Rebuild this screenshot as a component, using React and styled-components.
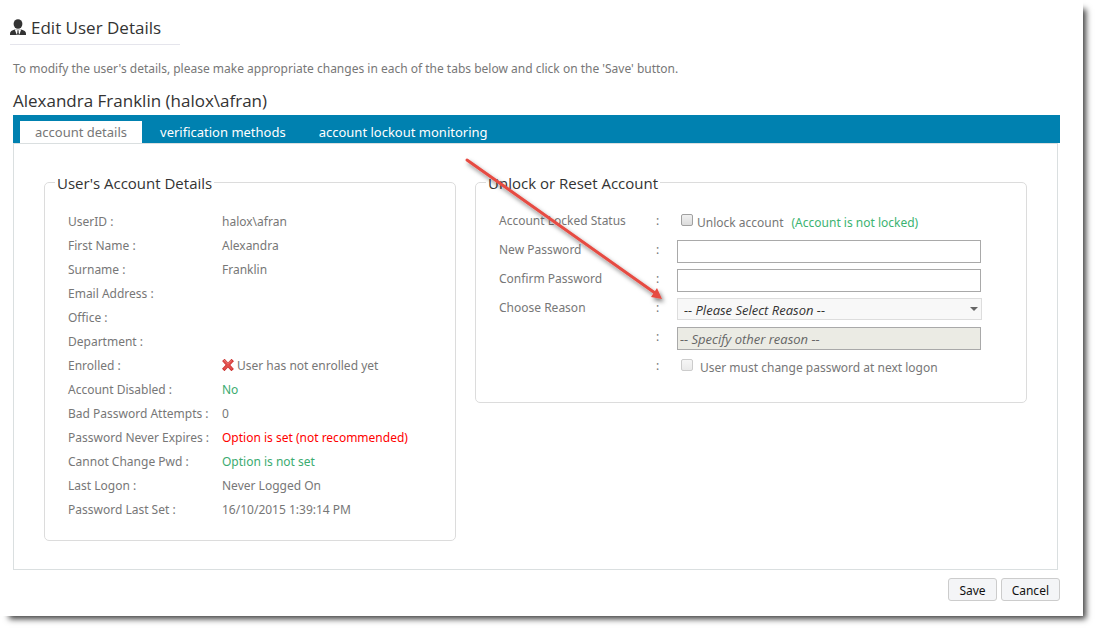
import React, { useState } from 'react';
import styled, { createGlobalStyle } from 'styled-components';

const GlobalStyle = createGlobalStyle`
    * {
        box-sizing: border-box;
    }
    body {
        margin: 0;
        background: #fff;
        color: #777;
        font-family: "Noto Sans", "Open Sans", sans-serif;
        font-size: 12px;
        line-height: 24px;
    }
    button, input, select {
        font: inherit;
    }
`

const Sheet = styled.main`
    margin: 0 15px 15px 0;
    padding: 14px 23px 15px 13px;
    background: #fff;
    box-shadow: 6px 6px 6px -3px rgba(0, 0, 0, 0.75);
`

const Header = styled.header`
    display: flex;
    align-items: center;
    gap: 5px;
    width: 170px;
    height: 31px;
    margin-left: -3px;
    padding-bottom: 3px;
    border-bottom: 1px solid #e5e5ec;
`

const Title = styled.h1`
    margin: 0;
    color: #333;
    font-family: "Open Sans", sans-serif;
    font-size: 17px;
    font-weight: 400;
    line-height: 26px;
    white-space: nowrap;
`

const Intro = styled.p`
    margin: 12px 0 7px;
`

const UserName = styled.h2`
    margin: 0;
    padding-bottom: 1px;
    color: #333;
    font-family: "Open Sans", sans-serif;
    font-size: 17px;
    font-weight: 400;
    line-height: 26px;
`

const TabBar = styled.nav`
    display: flex;
    height: 28px;
    padding: 6px 7px 0;
    gap: 3px;
    background: #0081b0;
`

const Tab = styled.button`
    padding: 0 15px;
    border: 0;
    background: ${props => props.$active ? '#fff' : 'transparent'};
    color: ${props => props.$active ? '#777' : '#fff'};
    font-size: 13px;
    line-height: 22px;
    cursor: pointer;
`

const Panel = styled.section`
    display: grid;
    grid-template-columns: 412fr 552fr;
    align-items: start;
    gap: 19px;
    margin-right: 2px;
    padding: 27px 30px 28px;
    border: 1px solid #dadfe0;
`

const Group = styled.fieldset`
    min-width: 0;
    margin: 0;
    padding: ${props => props.$readOnly ? '16px 23px 18px' : '14px 23px 20px'};
    border: 1px solid #dcdcdc;
    border-radius: 5px;
`

const Legend = styled.legend`
    margin-left: -13px;
    padding: 1px 2px 0;
    color: #333;
    font-family: "Open Sans", sans-serif;
    font-size: 15px;
    line-height: 22px;
`

const Details = styled.table`
    width: 100%;
    border-collapse: collapse;

    th, td {
        height: 24px;
        padding: 0;
        font-weight: 400;
        text-align: left;
        white-space: nowrap;
    }
    th {
        width: 154px;
    }
`

const tones = { good: '#3cab70', bad: '#f00' }

const Value = styled.span`
    color: ${props => tones[props.$tone] || 'inherit'};
`

const CrossSvg = styled.svg`
    margin-right: 3px;
    vertical-align: -1px;
`

const FormArea = styled.div`
    position: relative;
`

const ArrowSvg = styled.svg`
    position: absolute;
    top: -60px;
    left: -39px;
    pointer-events: none;
`

const FormRow = styled.div`
    display: grid;
    grid-template-columns: 157px 21px minmax(0, 305px);
    height: 29px;

    > label, > span {
        padding-top: 1px;
    }
`

const Field = styled.div`
    display: flex;
    align-items: flex-start;
    position: relative;
    padding-top: 3px;
    white-space: nowrap;
`

const TextBox = styled.input`
    width: 100%;
    height: 23px;
    margin-right: 1px;
    padding: 0 2px;
    border: 1px solid #a9a9a9;
    background: #fff;
    color: #333;
    font-family: "Open Sans", sans-serif;
    font-size: 13px;

    &:disabled {
        background: #ebebe4;
        color: #666;
        font-style: italic;
    }
`

const Select = styled.select`
    appearance: none;
    width: 100%;
    height: 22px;
    padding: 1px 20px 0 6px;
    border: 1px solid #ddd;
    border-radius: 0;
    background: #f8f8f8;
    color: #333;
    font-family: "Open Sans", sans-serif;
    font-size: 13px;
    font-style: italic;
    line-height: 20px;
`

const Caret = styled.span`
    position: absolute;
    top: 12px;
    right: 4px;
    border: 4px solid transparent;
    border-top-color: #666;
    border-bottom: 0;
    pointer-events: none;
`

const CheckBox = styled.input`
    appearance: none;
    flex: none;
    width: 12px;
    height: 12px;
    margin: 3px 4px 0;
    border: 1px solid #a0a0a0;
    border-radius: 2px;
    background: linear-gradient(#f0f0f0, #dcdcdc);

    &:checked {
        background: #555;
    }
    &:disabled {
        border-color: #ccc;
        background: linear-gradient(#f6f6f6, #eaeaea);
    }
`

const CheckLabel = styled.label`
    margin-left: ${props => props.$indent ? '3px' : 0};
    line-height: 23px;
`

const Note = styled.span`
    margin-left: 8px;
    color: #3cb371;
    line-height: 23px;
`

const Footer = styled.footer`
    display: flex;
    justify-content: flex-end;
    gap: 4px;
    margin-top: 8px;
`

const Button = styled.button`
    height: 23px;
    padding: 1px 10px 0;
    border: 1px solid #ccc;
    border-radius: 3px;
    background: #f4f5f7;
    color: #111;
    line-height: 22px;
`

const UserIcon = () => (
    <svg width="16" height="17" viewBox="0 0 16 17" aria-hidden="true">
        <ellipse cx="8" cy="5" rx="4.4" ry="4.8" fill="#333" />
        <path d="M0 16v-1.6c0-1.8 1.8-3 4.8-3.9h6.4c3 .9 4.8 2.1 4.8 3.9V16z" fill="#333" />
        <path d="M4.8 10.4h6.4L9.4 15.6H6.6z" fill="#fff" />
        <path d="M7 11.4h2l-.5 1.3.6 2.9H6.9l.6-2.9z" fill="#333" />
    </svg>
)

const Cross = () => (
    <CrossSvg width="12" height="12" viewBox="0 0 12 12" aria-hidden="true">
        <path d="M2.5 2.2l7 7.6M9.6 2.2l-7.2 7.6" stroke="#c9302f" strokeWidth="3.4" strokeLinecap="square" />
        <path d="M2.6 2.4l6.8 7.2M9.4 2.4l-6.8 7.2" stroke="#e4504c" strokeWidth="2" strokeLinecap="square" />
        <path d="M1.6 2.2l1-1 3.4 3.4 3.4-3.4" stroke="#ee8f8a" strokeWidth=".8" fill="none" />
    </CrossSvg>
)

const Arrow = () => (
    <ArrowSvg width="220" height="164" viewBox="0 0 220 164" aria-hidden="true">
        <defs>
            <filter id="arrowShadow" x="-10%" y="-10%" width="120%" height="120%">
                <feDropShadow dx="2" dy="3" stdDeviation="2" floodColor="#000" floodOpacity=".5" />
            </filter>
        </defs>
        <g filter="url(#arrowShadow)">
            <path d="M7 12l188 133" stroke="#e64b43" strokeWidth="3" strokeLinecap="round" />
            <path d="M202 151l-11-2 6-9z" fill="#e64b43" />
        </g>
    </ArrowSvg>
)

const tabs = ['account details', 'verification methods', 'account lockout monitoring']

const details = [
    { label: 'UserID :', value: 'halox\\afran' },
    { label: 'First Name :', value: 'Alexandra' },
    { label: 'Surname :', value: 'Franklin' },
    { label: 'Email Address :', value: '' },
    { label: 'Office :', value: '' },
    { label: 'Department :', value: '' },
    { label: 'Enrolled :', value: 'User has not enrolled yet', cross: true },
    { label: 'Account Disabled :', value: 'No', tone: 'good' },
    { label: 'Bad Password Attempts :', value: '0' },
    { label: 'Password Never Expires :', value: 'Option is set (not recommended)', tone: 'bad' },
    { label: 'Cannot Change Pwd :', value: 'Option is not set', tone: 'good' },
    { label: 'Last Logon :', value: 'Never Logged On' },
    { label: 'Password Last Set :', value: '16/10/2015 1:39:14 PM' },
]

const Row = ({ label, htmlFor, children }) => (
    <FormRow>
        {label ? <label htmlFor={htmlFor}>{label}</label> : <span />}
        <span>:</span>
        <Field>{children}</Field>
    </FormRow>
)

export default function App() {
    const [activeTab, setActiveTab] = useState(tabs[0])

    return (
        <Sheet>
            <GlobalStyle />
            <Header>
                <UserIcon />
                <Title>Edit User Details</Title>
            </Header>
            <Intro>
                To modify the user's details, please make appropriate changes in each of the tabs below and click on the 'Save' button.
            </Intro>
            <UserName>Alexandra Franklin (halox\afran)</UserName>
            <TabBar>
                {tabs.map(tab => (
                    <Tab key={tab} type="button" $active={tab === activeTab} onClick={() => setActiveTab(tab)}>
                        {tab}
                    </Tab>
                ))}
            </TabBar>
            <Panel>
                <Group $readOnly>
                    <Legend>User's Account Details</Legend>
                    <Details>
                        <tbody>
                            {details.map(row => (
                                <tr key={row.label}>
                                    <th scope="row">{row.label}</th>
                                    <td>
                                        {row.cross && <Cross />}
                                        <Value $tone={row.tone}>{row.value}</Value>
                                    </td>
                                </tr>
                            ))}
                        </tbody>
                    </Details>
                </Group>
                <Group>
                    <Legend>Unlock or Reset Account</Legend>
                    <FormArea>
                        <Row label="Account Locked Status" htmlFor="unlock">
                            <CheckBox type="checkbox" id="unlock" />
                            <CheckLabel htmlFor="unlock">Unlock account</CheckLabel>
                            <Note>(Account is not locked)</Note>
                        </Row>
                        <Row label="New Password" htmlFor="newPassword">
                            <TextBox type="password" id="newPassword" />
                        </Row>
                        <Row label="Confirm Password" htmlFor="confirmPassword">
                            <TextBox type="password" id="confirmPassword" />
                        </Row>
                        <Row label="Choose Reason" htmlFor="reason">
                            <Select id="reason">
                                <option>-- Please Select Reason --</option>
                            </Select>
                            <Caret />
                        </Row>
                        <Row>
                            <TextBox type="text" aria-label="Other reason" defaultValue="-- Specify other reason --" disabled />
                        </Row>
                        <Row>
                            <CheckBox type="checkbox" id="mustChange" disabled />
                            <CheckLabel htmlFor="mustChange" $indent>User must change password at next logon</CheckLabel>
                        </Row>
                        <Arrow />
                    </FormArea>
                </Group>
            </Panel>
            <Footer>
                <Button type="button">Save</Button>
                <Button type="button">Cancel</Button>
            </Footer>
        </Sheet>
    )
}
